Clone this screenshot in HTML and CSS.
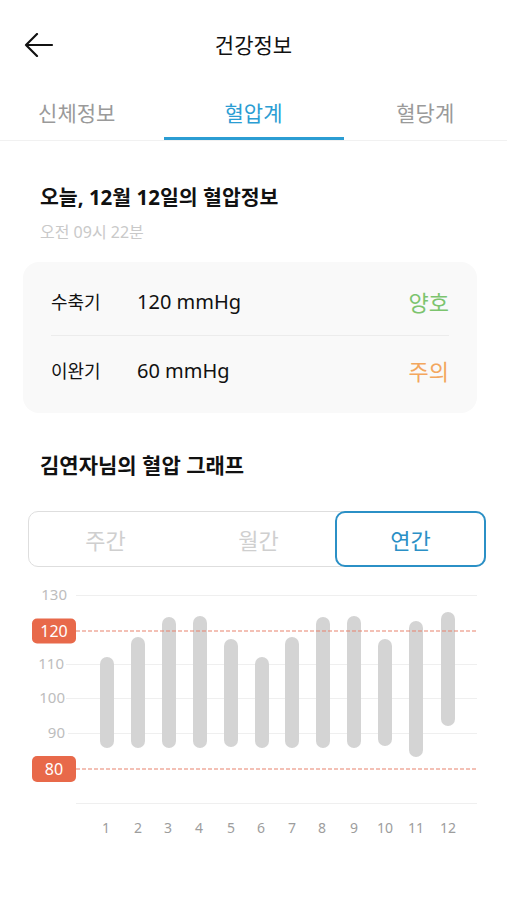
FILE: index.html
```html
<!DOCTYPE html>
<html lang="ko">
<head>
  <meta charset="UTF-8">
  <meta name="viewport" content="width=device-width, initial-scale=1.0">
  <title>건강정보</title>
  <link rel="stylesheet" href="styles.css">
</head>
<body>
  <header class="topbar">
    <button class="back" aria-label="뒤로">
      <svg width="30" height="24" viewBox="0 0 30 24">
        <path d="M28 12H2M13 1L2 12l11 11" fill="none" stroke="#111" stroke-width="2.2" stroke-linecap="round" stroke-linejoin="round"/>
      </svg>
    </button>
    <h1>건강정보</h1>
  </header>

  <nav class="tabs">
    <div class="tab">신체정보</div>
    <div class="tab active">혈압계</div>
    <div class="tab">혈당계</div>
  </nav>

  <section class="today">
    <h2>오늘, 12월 12일의 혈압정보</h2>
    <p class="time">오전 09시 22분</p>

    <div class="card">
      <div class="row">
        <span class="label">수축기</span>
        <span class="value">120 mmHg</span>
        <span class="status good">양호</span>
      </div>
      <div class="row">
        <span class="label">이완기</span>
        <span class="value">60 mmHg</span>
        <span class="status warn">주의</span>
      </div>
    </div>
  </section>

  <section class="graph">
    <h2>김연자님의 혈압 그래프</h2>

    <div class="segment">
      <div class="seg">주간</div>
      <div class="seg">월간</div>
      <div class="seg active">연간</div>
    </div>

    <svg class="chart" width="507" height="262" viewBox="0 580 507 262">
      <g stroke="#efefef" stroke-width="1">
        <line x1="76" y1="595.5" x2="477" y2="595.5"/>
        <line x1="66" y1="664.5" x2="477" y2="664.5"/>
        <line x1="66" y1="698.5" x2="477" y2="698.5"/>
        <line x1="68" y1="733.5" x2="477" y2="733.5"/>
        <line x1="76" y1="803.5" x2="477" y2="803.5"/>
      </g>
      <g class="ylab" text-anchor="end">
        <text x="67" y="600">130</text>
        <text x="64" y="669">110</text>
        <text x="65" y="703">100</text>
        <text x="65" y="738">90</text>
      </g>
      <g fill="#d4d4d4">
        <rect x="100" y="657" width="14" height="91" rx="7"/>
        <rect x="131" y="637" width="14" height="111" rx="7"/>
        <rect x="162" y="617" width="14" height="131" rx="7"/>
        <rect x="193" y="616" width="14" height="132" rx="7"/>
        <rect x="224" y="639" width="14" height="108" rx="7"/>
        <rect x="255" y="657" width="14" height="91" rx="7"/>
        <rect x="285" y="637" width="14" height="111" rx="7"/>
        <rect x="316" y="617" width="14" height="131" rx="7"/>
        <rect x="347" y="616" width="14" height="132" rx="7"/>
        <rect x="378" y="639" width="14" height="107" rx="7"/>
        <rect x="409" y="621" width="14" height="136" rx="7"/>
        <rect x="441" y="612" width="14" height="114" rx="7"/>
      </g>
      <g class="limit">
        <line x1="76" y1="631" x2="477" y2="631"/>
        <line x1="76" y1="769" x2="477" y2="769"/>
      </g>
      <g class="badge">
        <rect x="32" y="618.5" width="44" height="25" rx="5"/>
        <text x="54" y="636.5">120</text>
        <rect x="32" y="756" width="44" height="26" rx="5"/>
        <text x="54" y="774.5">80</text>
      </g>
      <g class="xlab" text-anchor="middle">
        <text x="106" y="833">1</text>
        <text x="138" y="833">2</text>
        <text x="168" y="833">3</text>
        <text x="199" y="833">4</text>
        <text x="231" y="833">5</text>
        <text x="261" y="833">6</text>
        <text x="292" y="833">7</text>
        <text x="322" y="833">8</text>
        <text x="354" y="833">9</text>
        <text x="385" y="833">10</text>
        <text x="416" y="833">11</text>
        <text x="448" y="833">12</text>
      </g>
    </svg>
  </section>
</body>
</html>
```

FILE: styles.css
```css
body {
  margin: 0;
  background: #fff;
  color: #111;
  font-family: "Noto Sans", "Noto Sans CJK KR", sans-serif;
  width: 507px;
}
h1, h2, p {
  margin: 0;
}

.topbar {
  position: relative;
  height: 90px;
  display: flex;
  align-items: center;
  justify-content: center;
}
.topbar h1 {
  font-size: 21px;
  font-weight: 400;
  line-height: 26px;
}
.back {
  position: absolute;
  left: 24px;
  top: 33px;
  padding: 0;
  border: 0;
  background: none;
  display: flex;
}

.tabs {
  display: grid;
  grid-template-columns: 1fr 180px 1fr;
  border-bottom: 1px solid #f1f1f1;
}
.tab {
  text-align: center;
  font-size: 21px;
  line-height: 47px;
  color: #9a9a9a;
  border-bottom: 3px solid transparent;
}
.tab:first-child {
  padding-right: 10px;
}
.tab.active {
  color: #2b9dd3;
  border-bottom-color: #2b9dd3;
}

.today h2,
.graph h2 {
  font-size: 21px;
  font-weight: 700;
  line-height: 26px;
  padding-left: 40px;
}
.today h2 {
  margin-top: 43px;
  font-size: 20.5px;
}
.time {
  margin-top: 12px;
  padding-left: 40px;
  font-size: 16px;
  line-height: 20px;
  color: #c9c9c9;
}

.card {
  margin: 20px 30px 0 23px;
  padding: 5px 28px 9px;
  background: #f9f9f9;
  border-radius: 16px;
}
.row {
  display: flex;
  align-items: center;
  height: 68px;
}
.row + .row {
  border-top: 1px solid #ececec;
}
.label {
  width: 86px;
  font-size: 18px;
}
.value {
  flex: 1;
  font-size: 20px;
}
.status {
  font-size: 22px;
}
.good {
  color: #7cc46e;
}
.warn {
  color: #f3a75e;
}

.graph h2 {
  margin-top: 39px;
}
.segment {
  display: flex;
  margin: 33px 21px 0 28px;
  height: 56px;
  box-sizing: border-box;
  border: 1px solid #dedede;
  border-radius: 10px;
}
.seg {
  flex: 1;
  display: flex;
  align-items: center;
  justify-content: center;
  font-size: 22px;
  color: #cfcfcf;
}
.seg.active {
  flex: 0 0 151px;
  box-sizing: border-box;
  margin: -1px -1px -1px 0;
  border: 2px solid #2b90c6;
  border-radius: 10px;
  color: #2b90c6;
}

.chart {
  display: block;
  margin-top: 13px;
}
.ylab text {
  font-size: 15px;
  fill: #bdbdbd;
}
.limit line {
  stroke: #e8826c;
  stroke-width: 1.2;
  stroke-dasharray: 4 2;
}
.badge rect {
  fill: #e8694a;
}
.badge text {
  fill: #fff;
  font-size: 16px;
  text-anchor: middle;
}
.xlab text {
  font-size: 14px;
  fill: #9d9d9d;
}
```
